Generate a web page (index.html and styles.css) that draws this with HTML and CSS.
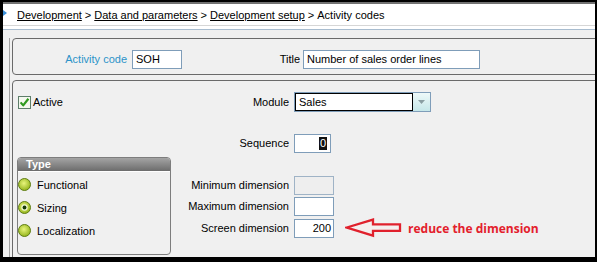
FILE: index.html
```html
<!DOCTYPE html>
<html>
<head>
<meta charset="utf-8">
<link rel="stylesheet" href="styles.css">
</head>
<body>
<div class="window">
  <div class="crumbs">
    <svg class="crumb-icon" width="4" height="6" viewBox="0 0 4 6"><path d="M0 0 L4 3 L0 6 Z" fill="#3a8fd8"/></svg>
    <a class="crumb">Development</a><span class="sep">&gt;</span><a class="crumb">Data and parameters</a><span class="sep">&gt;</span><a class="crumb">Development setup</a><span class="sep">&gt;</span><span class="crumb-last">Activity codes</span>
  </div>
  <div class="crumbs-rule"></div>
  <div class="main">
    <div class="frame">
      <div class="box box-head">
        <span class="lbl lbl-code">Activity code</span>
        <span class="input w-code">SOH</span>
        <span class="lbl lbl-title">Title</span>
        <span class="input w-title">Number of sales order lines</span>
      </div>
      <div class="box box-body">
        <div class="row row-module">
          <div class="col1 check">
            <svg width="13" height="13" viewBox="0 0 13 13"><rect x="0.5" y="0.5" width="12" height="12" fill="#f4f8ee" stroke="#5e7e6a"/><path d="M2.6 6.4 L5.2 9.4 L10.4 2.8" fill="none" stroke="#2f9a1e" stroke-width="2.2" stroke-linejoin="round"/></svg>
            <span>Active</span>
          </div>
          <span class="lbl lbl-col">Module</span>
          <div class="select">
            <span class="select-text">Sales</span>
            <span class="select-btn"><svg width="7" height="4" viewBox="0 0 7 4"><path d="M0 0 H7 L3.5 4 Z" fill="#8a9ea2"/></svg></span>
          </div>
        </div>
        <div class="row row-seq">
          <div class="col1"></div>
          <span class="lbl lbl-col">Sequence</span>
          <span class="input w-seq"><span class="sel">0</span></span>
        </div>
        <div class="lower">
          <div class="typebox">
            <div class="type-head">Type</div>
            <div class="radio"><svg width="13" height="13" viewBox="0 0 13 13"><defs><radialGradient id="g" cx="45%" cy="40%" r="60%"><stop offset="0" stop-color="#e8f57c"/><stop offset="1" stop-color="#94b41c"/></radialGradient></defs><circle cx="6.5" cy="6.5" r="6" fill="url(#g)" stroke="#5f7d14"/></svg><span>Functional</span></div>
            <div class="radio"><svg width="13" height="13" viewBox="0 0 13 13"><circle cx="6.5" cy="6.5" r="6" fill="url(#g)" stroke="#5f7d14"/><circle cx="6.5" cy="6.5" r="3.2" fill="#eef6d0"/><circle cx="6.5" cy="6.5" r="1.9" fill="#163a06"/></svg><span>Sizing</span></div>
            <div class="radio"><svg width="13" height="13" viewBox="0 0 13 13"><circle cx="6.5" cy="6.5" r="6" fill="url(#g)" stroke="#5f7d14"/></svg><span>Localization</span></div>
          </div>
          <div class="dims">
            <span class="lbl lbl-col">Minimum dimension</span>
            <span class="input w-dim disabled"></span>
            <span class="lbl lbl-col">Maximum dimension</span>
            <span class="input w-dim"></span>
            <span class="lbl lbl-col">Screen dimension</span>
            <div class="dim-note">
              <span class="input w-dim num">200</span>
              <svg class="arrow" width="57" height="20" viewBox="0 0 57 20"><path d="M1.8 9.5 L28 1.6 L28 6.4 L55 6.4 L55 12.8 L28 12.8 L28 17.6 Z" fill="#f4eeee" stroke="#e0202c" stroke-width="2.3" stroke-linejoin="miter"/></svg>
              <span class="note">reduce the dimension</span>
            </div>
          </div>
        </div>
      </div>
    </div>
  </div>
</div>
</body>
</html>
```
FILE: styles.css
```css
html, body {
  margin: 0;
  padding: 0;
}
body {
  width: 597px;
  height: 262px;
  overflow: hidden;
  background: #000;
  font-family: "Liberation Sans", Arial, sans-serif;
  font-size: 11px;
  color: #000;
}
.window {
  margin: 2px 2px 0 3px;
  height: 255px;
  background: #f0f0f0;
  display: flex;
  flex-direction: column;
  overflow: hidden;
}
.crumbs {
  flex-shrink: 0;
  height: 21px;
  border-top: 2px solid #727272;
  border-bottom: 1px solid #d6d6d6;
  background: #fff;
  display: flex;
  align-items: center;
  padding-left: 14px;
  position: relative;
  white-space: nowrap;
}
.crumb-icon {
  position: absolute;
  left: 0;
  top: 6px;
}
.crumb {
  text-decoration: underline;
  color: #000;
}
.sep {
  margin: 0 3px;
}
.crumbs-rule {
  flex-shrink: 0;
  height: 3px;
  background: #fff;
  border-bottom: 1px solid #a8bccf;
}
.main {
  flex: 1;
  min-height: 0;
  overflow: hidden;
  padding: 8px 0 0 6px;
  display: flex;
}
.frame {
  flex: 1;
  border-left: 1px solid #a3a3a3;
  padding-left: 2px;
  margin-right: -8px;
}
.box {
  border: 1px solid #6a6a6a;
  border-radius: 4px;
  box-sizing: border-box;
}
.box-head {
  height: 37px;
  padding-top: 11px;
  display: flex;
  align-items: flex-start;
}
.lbl {
  line-height: 19px;
  text-align: right;
  white-space: nowrap;
}
.lbl-code {
  width: 114px;
  margin-right: 5px;
  color: #2b93c9;
}
.lbl-title {
  width: 118px;
  margin-right: 3px;
}
.input {
  height: 19px;
  box-sizing: border-box;
  border: 1px solid #7f9db9;
  background: #fff;
  line-height: 17px;
  padding: 0 3px;
  white-space: nowrap;
  display: block;
}
.w-code { width: 50px; }
.w-title { width: 177px; }
.w-seq {
  width: 37px;
  text-align: right;
  padding-right: 3px;
}
.sel {
  display: inline-block;
  vertical-align: top;
  margin-top: 2px;
  height: 13px;
  line-height: 13px;
  background: #111;
  color: #fff;
  padding: 0 1px;
}
.w-dim { width: 40px; }
.disabled {
  background: #eeeeee;
  border-color: #9fb3c6;
}
.num {
  text-align: right;
  padding-right: 2px;
}
.box-body {
  margin-top: 5px;
  height: 200px;
  padding-left: 4px;
}
.row {
  display: flex;
  align-items: center;
}
.row-module {
  margin-top: 11px;
  height: 20px;
}
.row-seq {
  margin-top: 22px;
  height: 19px;
}
.col1 {
  width: 154px;
}
.check {
  display: flex;
  align-items: center;
  padding-left: 1px;
  box-sizing: border-box;
}
.check svg {
  margin-right: 2px;
}
.lbl-col {
  box-sizing: border-box;
  width: 123px;
  padding-right: 5px;
}
.select {
  width: 137px;
  height: 20px;
  box-sizing: border-box;
  border: 1px solid #7f9db9;
  display: flex;
}
.select-text {
  flex: 1;
  border: 1px solid #000;
  background: #fff;
  line-height: 16px;
  padding-left: 3px;
}
.select-btn {
  width: 17px;
  background: linear-gradient(#eef9f9, #c6e7e9);
  display: flex;
  align-items: center;
  justify-content: center;
}
.lower {
  margin-top: 4px;
  display: flex;
  align-items: flex-start;
}
.typebox {
  width: 154px;
  height: 98px;
  box-sizing: border-box;
  border: 1px solid #7d7d7d;
  border-radius: 4px;
  overflow: hidden;
}
.type-head {
  height: 13px;
  background: linear-gradient(#a4a4a4, #6c6c6c);
  border-bottom: 1px solid #fff;
  color: #fff;
  font-weight: bold;
  line-height: 13px;
  padding-left: 8px;
}
.radio {
  display: flex;
  align-items: center;
  height: 23px;
  gap: 6px;
}
.type-head + .radio {
  margin-top: 1px;
}
.dims {
  padding-top: 19px;
  display: grid;
  grid-template-columns: 123px auto;
  row-gap: 2px;
  align-items: center;
}
.dim-note {
  display: flex;
  align-items: center;
}
.arrow {
  margin-left: 11px;
}
.note {
  margin-left: 6px;
  color: #e3202c;
  font-family: "Open Sans", sans-serif;
  font-weight: 700;
  font-size: 12px;
}
```
